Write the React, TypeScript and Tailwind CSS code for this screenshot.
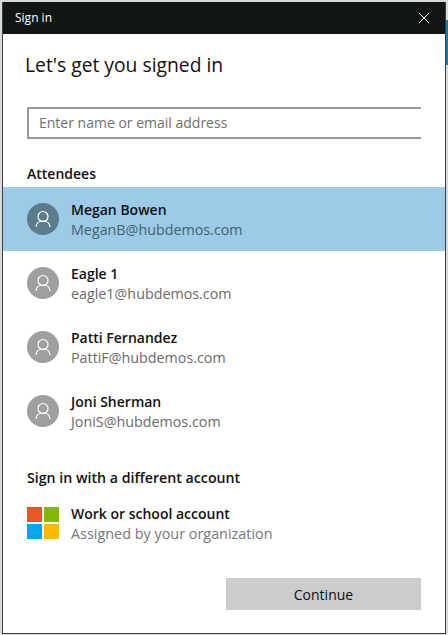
const font = { fontFamily: '"Open Sans", sans-serif' };

function Avatar({ active }: { active?: boolean }) {
  return (
    <div className={`flex h-8 w-8 shrink-0 items-center justify-center rounded-full ${active ? "bg-[#5c7b8b]" : "bg-[#a09ea0]"}`}>
      <svg width="20" height="20" viewBox="0 0 20 20" fill="none" stroke="white" strokeWidth="1.2">
        <circle cx="10" cy="7.5" r="5" />
        <path d="M3 18c.3-3.8 3-6 7-6s6.700 2.200 7 6" />
      </svg>
    </div>
  );
}

function Row({ name, email, active }: { name: string; email: string; active?: boolean }) {
  return (
    <div className={`flex h-16 items-center gap-[12px] pl-[24px] ${active ? "bg-[#9bcbe7]" : ""}`}>
      <Avatar active={active} />
      <div className="pt-[2px]">
        <div className="text-[14px] leading-5 font-semibold text-[#111]">{name}</div>
        <div className={`text-[14.3px] leading-5 ${active ? "text-[#47606e]" : "text-[#6b6b6b]"}`}>{email}</div>
      </div>
    </div>
  );
}

export default function App() {
  return (
    <div className="flex h-[635px] w-[448px] bg-[#d9d9d9] pt-[2px] pl-[2px]" style={font}>
      <div className="flex h-[632px] w-[444px] shrink-0 flex-col border-r border-b border-l border-[#3f3f3f] bg-white">
        <div className="flex h-[32px] shrink-0 items-center justify-between bg-[#111613] pr-[15px] pl-[12px] text-[12px] text-white">
          <span>Sign in</span>
          <svg width="12" height="12" viewBox="0 0 12 12" stroke="white" strokeWidth="1">
            <path d="M1 1l10 10M11 1L1 11" />
          </svg>
        </div>
        <h1 className="mt-[17px] pl-[22px] text-[19.3px] leading-7 text-[#111]">Let's get you signed in</h1>
        <div className="mt-[28px] ml-[24px] flex h-8 w-[394px] items-center border-t-2 border-b-2 border-l-2 border-[#999] pb-[2px] pl-[10px] text-[14px] text-[#6f6f6f]">
          Enter name or email address
        </div>
        <div className="mt-[25px] mb-[3px] pl-[24px] text-[14px] leading-5 font-semibold text-[#111]">Attendees</div>
        <Row name="Megan Bowen" email="MeganB@hubdemos.com" active />
        <Row name="Eagle 1" email="eagle1@hubdemos.com" />
        <Row name="Patti Fernandez" email="PattiF@hubdemos.com" />
        <Row name="Joni Sherman" email="JoniS@hubdemos.com" />
        <div className="mt-[25px] pl-[24px] text-[14.2px] leading-5 font-semibold text-[#111]">Sign in with a different account</div>
        <div className="mt-[16px] flex h-[40px] items-start gap-[12px] pl-[24px]">
          <div className="mt-[3px] grid h-8 w-8 grid-cols-2 gap-[2px]">
            <div className="bg-[#f25325]" />
            <div className="bg-[#80bb01]" />
            <div className="bg-[#01a6f0]" />
            <div className="bg-[#ffba00]" />
          </div>
          <div>
            <div className="text-[14px] leading-5 font-semibold text-[#111]">Work or school account</div>
            <div className="text-[14.4px] leading-5 text-[#777]">Assigned by your organization</div>
          </div>
        </div>
        <div className="mt-[34px] ml-[223px] flex h-8 w-[195px] items-center justify-center bg-[#cccccc] text-[14px] text-[#111]">Continue</div>
      </div>
      <div className="mt-[18px] h-[45px] w-[2px] bg-[#0f7db5]" />
    </div>
  );
}
